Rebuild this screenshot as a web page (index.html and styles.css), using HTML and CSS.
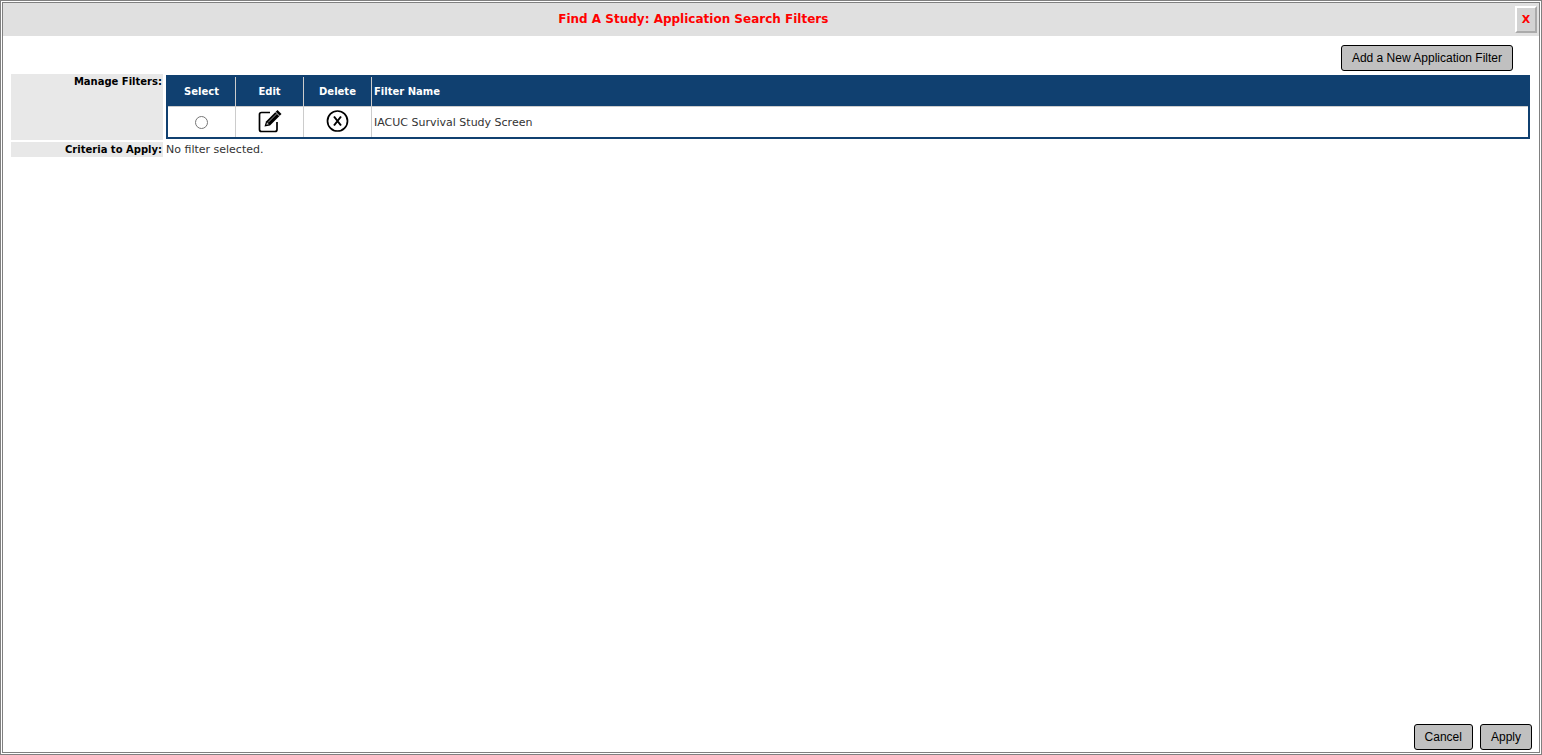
FILE: index.html
```html
<!DOCTYPE html>
<html lang="en">
<head>
    <meta charset="UTF-8">
    <meta name="viewport" content="width=device-width, initial-scale=1.0">
    <title>Application Search Filters</title>
    <link rel="stylesheet" href="styles.css">
</head>
<body>
    <div class="dialog">
        <header class="title-bar">
            <h1>Find A Study: Application Search Filters</h1>
            <button type="button" class="close">X</button>
        </header>

        <div class="toolbar">
            <button type="button" class="btn">Add a New Application Filter</button>
        </div>

        <main class="form">
            <div class="form-label" id="manageLabel">Manage Filters:</div>
            <div class="form-value">
                <table class="filters" aria-labelledby="manageLabel">
                    <thead>
                        <tr>
                            <th class="tool">Select</th>
                            <th class="tool">Edit</th>
                            <th class="tool">Delete</th>
                            <th>Filter Name</th>
                        </tr>
                    </thead>
                    <tbody>
                        <tr>
                            <td class="tool"><input type="radio" name="filter" id="filter1"></td>
                            <td class="tool">
                                <button type="button" class="icon" aria-label="Edit">
                                    <svg width="24" height="24" viewBox="0 0 24 24">
                                        <path d="M12 3.500H3.500Q1.500 3.500 1.500 5.500V20.500Q1.500 22.500 3.500 22.500H17Q19 22.500 19 20.500V13" fill="none" stroke="#000" stroke-width="1.700"/>
                                        <path d="M6.500 17.500L8 12.500L19.500 1L23.500 5L12 16.500Z" fill="#000"/>
                                        <path d="M10 13.500L18.500 5" stroke="#999" stroke-width="1"/>
                                        <path d="M17.500 3L21.500 7" stroke="#ddd" stroke-width="1"/>
                                        <path d="M8.300 15.800L9 13.500L11 15.300Z" fill="#ccc"/>
                                    </svg>
                                </button>
                            </td>
                            <td class="tool">
                                <button type="button" class="icon" aria-label="Delete">
                                    <svg width="24" height="24" viewBox="0 0 24 24">
                                        <circle cx="11.500" cy="12" r="10" fill="none" stroke="#000" stroke-width="1.700"/>
                                        <path d="M8 7.500L15 16.500M15 7.500L8 16.500" stroke="#000" stroke-width="2"/>
                                    </svg>
                                </button>
                            </td>
                            <td><label for="filter1">IACUC Survival Study Screen</label></td>
                        </tr>
                    </tbody>
                </table>
            </div>
            <div class="form-label">Criteria to Apply:</div>
            <div class="form-value">No filter selected.</div>
        </main>

        <footer class="actions">
            <button type="button" class="btn">Cancel</button>
            <button type="button" class="btn">Apply</button>
        </footer>
    </div>
</body>
</html>
```

FILE: styles.css
```css
* {
    box-sizing: border-box;
}

body {
    margin: 0;
    font-family: Verdana, "DejaVu Sans", sans-serif;
    font-size: 11px;
    line-height: 15px;
    color: #333;
    background-color: #fff;
}

.dialog {
    display: flex;
    flex-direction: column;
    min-height: 100vh;
    border: 3px double #808080;
}

.title-bar {
    display: flex;
    align-items: center;
    justify-content: space-between;
    height: 33px;
    padding-right: 2px;
    background-color: #e0e0e0;
}

.title-bar h1 {
    flex: 0 0 90%;
    margin: 0;
    font-size: 12px;
    text-align: center;
    color: #f00;
}

.close {
    width: 22px;
    height: 27px;
    padding: 0;
    border: 2px solid;
    border-color: #fff #aaa #aaa #fff;
    background-color: #d3d3d3;
    font-family: inherit;
    font-size: 11px;
    font-weight: bold;
    color: #f00;
}

.toolbar {
    display: flex;
    justify-content: flex-end;
    padding: 9px 26px 3px;
}

.btn {
    height: 26px;
    padding: 0 10px;
    border: 1px solid #000;
    border-radius: 3px;
    background-color: #c0c0c0;
    font-family: Arial, "Liberation Sans", sans-serif;
    font-size: 12px;
    color: #000;
    cursor: pointer;
}

.form {
    display: grid;
    grid-template-columns: 10% 1fr;
    gap: 2px;
    padding: 0 8px;
}

.form-label {
    padding-right: 1px;
    background-color: #e8e8e8;
    font-size: 10px;
    font-weight: bold;
    text-align: right;
    color: #000;
}

.form-value {
    padding: 0 1px;
}

/* filter list */
.filters {
    width: 100%;
    margin: 1px 0;
    border: 2px solid #104070;
    border-spacing: 0;
}

.filters th {
    height: 29px;
    padding: 0 2px;
    background-color: #104070;
    font-size: 10px;
    text-align: left;
    color: #fff;
}

.filters td {
    height: 31px;
    padding: 0 2px;
    border-top: 1px solid #ccc;
}

.filters .tool {
    width: 68px;
    border-right: 1px solid #ccc;
    text-align: center;
}

.filters input {
    display: block;
    width: 13px;
    height: 13px;
    margin: 0 auto;
}

.icon {
    display: block;
    margin: 0 auto;
    padding: 0 0 2px;
    border: 0;
    background: none;
    cursor: pointer;
}

.icon svg {
    display: block;
}

.actions {
    display: flex;
    justify-content: flex-end;
    gap: 7px;
    margin-top: auto;
    padding: 2px 7px;
}
```
